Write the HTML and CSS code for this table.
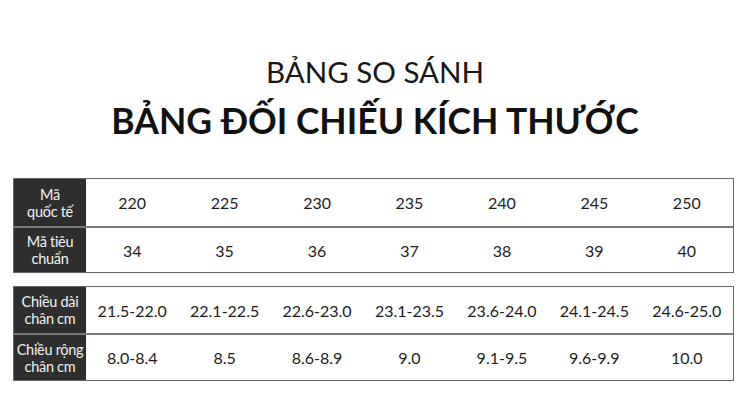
FILE: index.html
```html
<!DOCTYPE html>
<html lang="vi">
<head>
<meta charset="utf-8">
<link rel="stylesheet" href="styles.css">
</head>
<body>
<div class="page">
  <h2 class="sub">BẢNG SO SÁNH</h2>
  <h1 class="title">BẢNG ĐỐI CHIẾU KÍCH THƯỚC</h1>
  <div class="table t1">
    <div class="row r1">
      <div class="head">Mã<br>quốc tế</div>
      <div class="cell">220</div><div class="cell">225</div><div class="cell">230</div><div class="cell">235</div><div class="cell">240</div><div class="cell">245</div><div class="cell">250</div>
    </div>
    <div class="row r2">
      <div class="head">Mã tiêu<br>chuẩn</div>
      <div class="cell">34</div><div class="cell">35</div><div class="cell">36</div><div class="cell">37</div><div class="cell">38</div><div class="cell">39</div><div class="cell">40</div>
    </div>
  </div>
  <div class="table t2">
    <div class="row r3">
      <div class="head">Chiều dài<br>chân cm</div>
      <div class="cell">21.5-22.0</div><div class="cell">22.1-22.5</div><div class="cell">22.6-23.0</div><div class="cell">23.1-23.5</div><div class="cell">23.6-24.0</div><div class="cell">24.1-24.5</div><div class="cell">24.6-25.0</div>
    </div>
    <div class="row r4">
      <div class="head">Chiều rộng<br>chân cm</div>
      <div class="cell">8.0-8.4</div><div class="cell">8.5</div><div class="cell">8.6-8.9</div><div class="cell">9.0</div><div class="cell">9.1-9.5</div><div class="cell">9.6-9.9</div><div class="cell">10.0</div>
    </div>
  </div>
</div>
</body>
</html>
```
FILE: styles.css
```css
html, body {
  margin: 0;
  padding: 0;
  background: #ffffff;
}
.page {
  width: 750px;
  height: 413px;
  font-family: Lato, "Noto Sans", sans-serif;
  color: #1a1a1a;
  padding-top: 55px;
  box-sizing: border-box;
  overflow: hidden;
}
.sub {
  margin: 0;
  text-align: center;
  font-size: 29.5px;
  font-weight: 400;
  line-height: 34px;
  color: #161616;
}
.title {
  margin: 12px 0 0 0;
  text-align: center;
  font-size: 35.5px;
  font-weight: 700;
  line-height: 40px;
  color: #111111;
}
.table {
  margin-left: 13px;
  width: 721px;
  border: 1px solid #666666;
  box-sizing: border-box;
}
.t1 {
  margin-top: 37px;
}
.t2 {
  margin-top: 13px;
}
.row {
  display: grid;
  grid-template-columns: 72px repeat(7, 1fr);
}
.row + .row {
  border-top: 2px solid #7a7a7a;
}
.r1 { height: 47px; }
.r2 { height: 44px; }
.r3 { height: 46px; }
.r4 { height: 45px; }
.head {
  background: #2e2e2e;
  color: #f2f2f2;
  font-size: 14.5px;
  line-height: 17px;
  text-align: center;
  display: flex;
  align-items: center;
  justify-content: center;
  white-space: nowrap;
  letter-spacing: -0.3px;
}
.cell {
  display: flex;
  align-items: center;
  justify-content: center;
  font-size: 16px;
  color: #1c1c1c;
  white-space: nowrap;
}
```
